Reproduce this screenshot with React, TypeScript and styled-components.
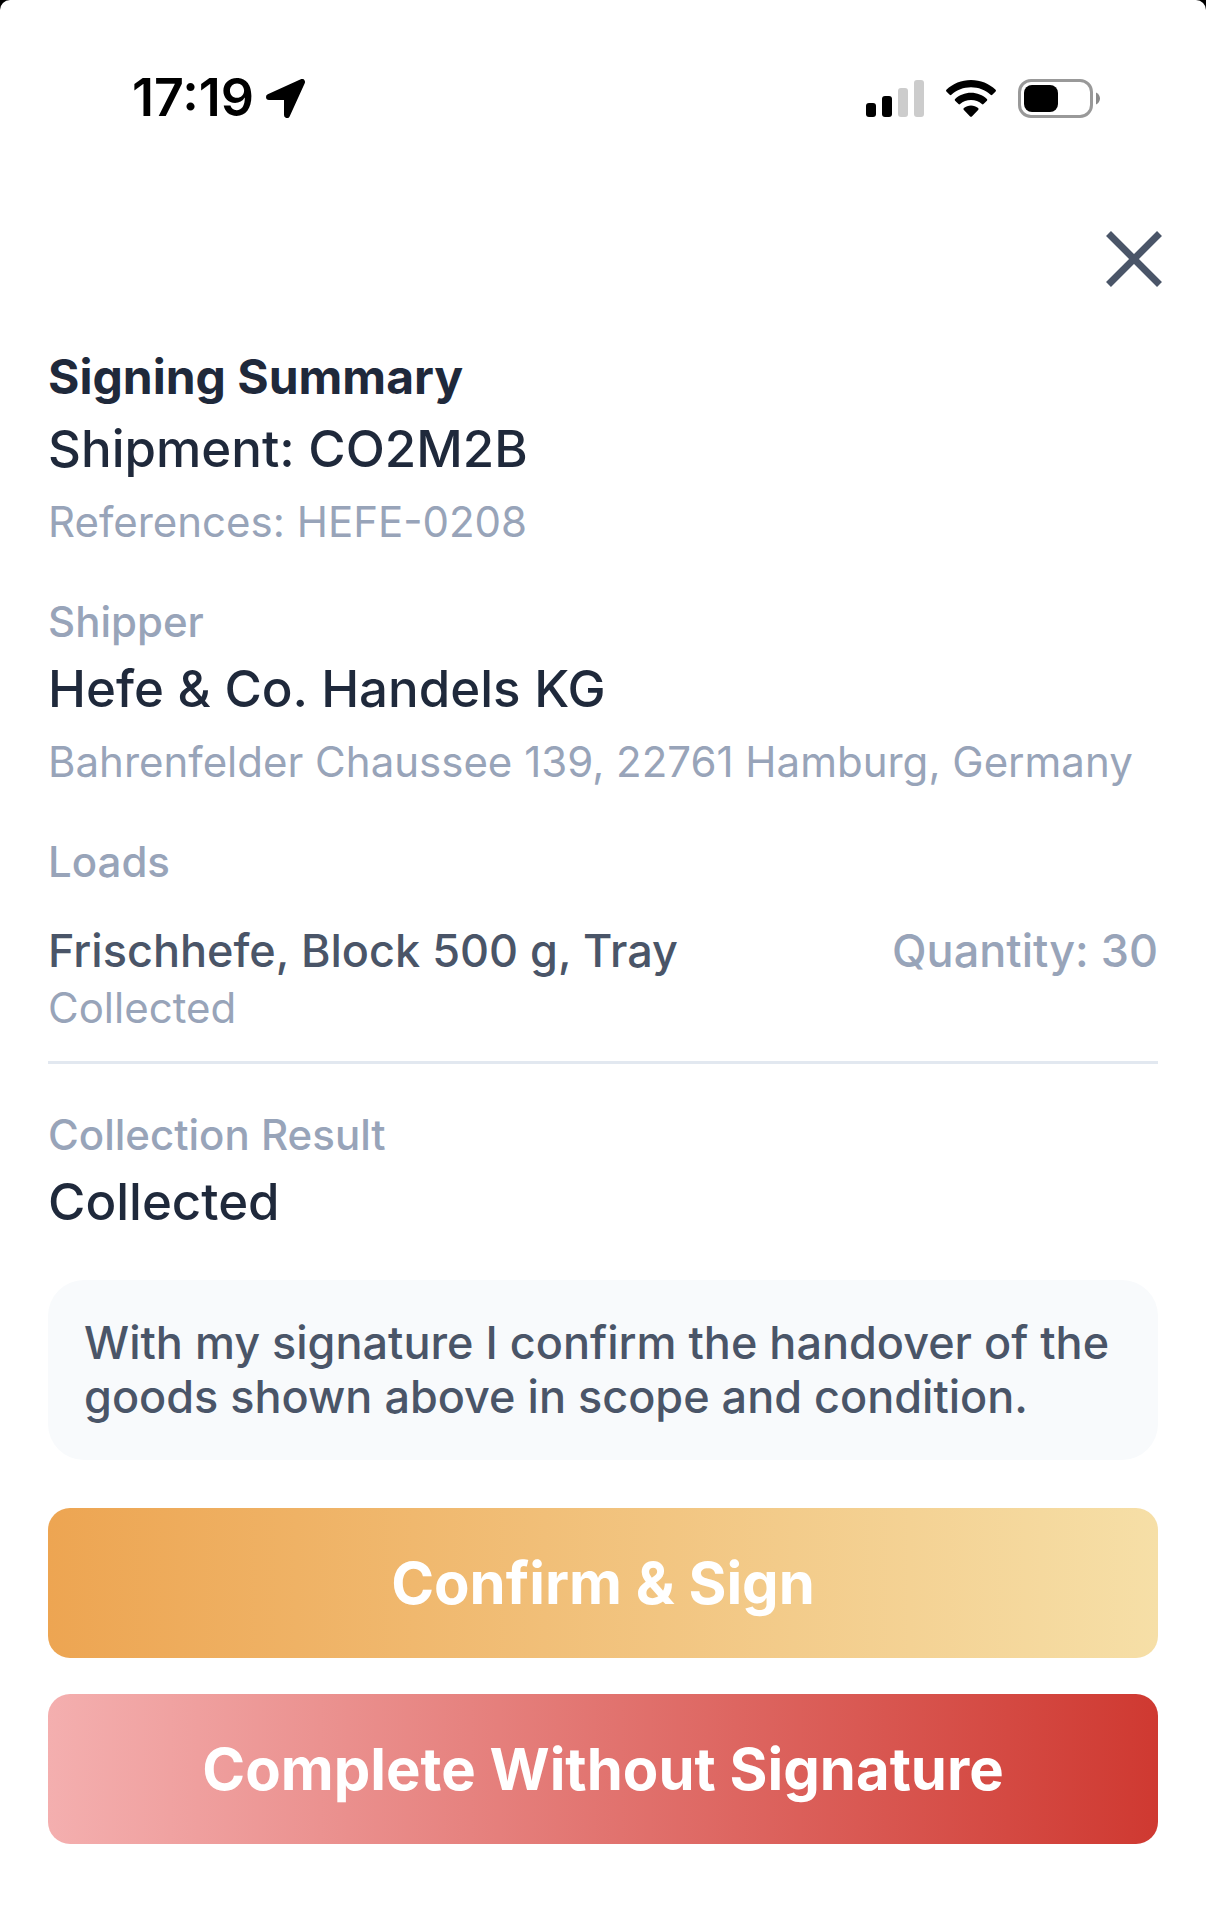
import React from "react";
import styled, { createGlobalStyle } from "styled-components";

const ink = "#1f293b";
const slate = "#4a5568";
const muted = "#98a4b9";

const GlobalStyle = createGlobalStyle`
  * { box-sizing: border-box; }
  body {
    margin: 0;
    background: #000;
    font-family: Inter, "Liberation Sans", sans-serif;
    -webkit-font-smoothing: antialiased;
    font-optical-sizing: none;
    font-variation-settings: "opsz" 14;
  }
`;

const Screen = styled.div`
  min-height: 100vh;
  background: #fff;
  border-radius: 10px 10px 0 0;
`;

const StatusBar = styled.div`
  display: flex;
  align-items: center;
  justify-content: space-between;
  height: 196px;
  padding: 0 106px 0 132px;
`;

const StatusGroup = styled.div<{ $gap: number }>`
  display: flex;
  align-items: center;
  gap: ${(p) => p.$gap}px;
`;

const Time = styled.time`
  font-size: 52px;
  line-height: 60px;
  font-weight: 600;
  color: #000;
`;

const CloseRow = styled.div`
  display: flex;
  justify-content: flex-end;
  padding: 0 36px;
`;

const CloseButton = styled.button`
  display: flex;
  align-items: center;
  justify-content: center;
  width: 72px;
  height: 126px;
  padding: 0;
  border: 0;
  background: none;
  color: ${slate};
  cursor: pointer;
`;

const Content = styled.main`
  padding: 20px 48px 48px;
`;

const Section = styled.section`
  margin-bottom: 34px;
`;

const Title = styled.h1`
  margin: 0;
  font-size: 48px;
  line-height: 70px;
  font-weight: 700;
  color: ${ink};
`;

const Label = styled.h2`
  margin: 0;
  font-size: 42px;
  line-height: 60px;
  font-weight: 500;
  color: ${muted};
`;

const Value = styled.p`
  margin: 0;
  font-size: 51px;
  line-height: 74px;
  font-weight: 500;
  color: ${ink};
`;

const Detail = styled.p`
  margin: 0;
  font-size: 42px;
  line-height: 72px;
  font-weight: 400;
  color: ${muted};
`;

const LoadList = styled.ul`
  list-style: none;
  margin: 32px 0 41px;
  padding: 0;
`;

const LoadItem = styled.li`
  padding-bottom: 23px;
  border-bottom: 3px solid #e2e8f0;
`;

const LoadHeading = styled.div`
  display: flex;
  justify-content: space-between;
  font-size: 45px;
  line-height: 54px;
  font-weight: 500;
`;

const LoadName = styled.span`
  color: ${slate};
`;

const Quantity = styled.span`
  color: ${muted};
`;

const LoadStatus = styled(Detail)`
  line-height: 60px;
`;

const Notice = styled.p`
  margin: 41px 0 48px;
  padding: 36px;
  border-radius: 36px;
  background: #f8fafc;
  font-size: 45px;
  line-height: 54px;
  font-weight: 500;
  color: ${slate};
`;

const Actions = styled.div`
  display: flex;
  flex-direction: column;
  gap: 36px;
`;

const ActionButton = styled.button<{ $from: string; $to: string }>`
  height: 150px;
  border: 0;
  border-radius: 22px;
  background: linear-gradient(to right, ${(p) => p.$from}, ${(p) => p.$to});
  font-family: inherit;
  font-size: 58px;
  font-weight: 700;
  color: #fff;
  cursor: pointer;
`;

const LocationIcon = () => (
  <svg width="39" height="39" viewBox="0 0 39 39" aria-hidden="true">
    <path
      d="M36 3 L21 36 V18 H3 Z"
      fill="#000"
      stroke="#000"
      strokeWidth="6"
      strokeLinejoin="round"
    />
  </svg>
);

const SignalIcon = () => (
  <svg width="58" height="39" viewBox="0 0 58 39" aria-hidden="true">
    <rect x="0" y="24" width="10" height="14" rx="3" fill="#000" />
    <rect x="16" y="17" width="10" height="21" rx="3" fill="#000" />
    <rect x="32" y="9" width="10" height="29" rx="3" fill="#ccc" />
    <rect x="48" y="1" width="10" height="37" rx="3" fill="#ccc" />
  </svg>
);

const WifiIcon = () => (
  <svg width="50" height="39" viewBox="0 -1 50 39" aria-hidden="true">
    <path d="M25 0 C34.500 0 43.200 3.700 49.600 9.700 C50.100 10.200 50.100 10.900 49.600 11.400 L46.300 14.800 C45.800 15.300 45.100 15.300 44.600 14.800 C39.300 10 32.400 7.300 25 7.300 C17.600 7.300 10.700 10 5.400 14.800 C4.900 15.300 4.200 15.300 3.700 14.800 L.4 11.400 C-.1 10.900 -.1 10.200 .4 9.700 C6.800 3.700 15.500 0 25 0 Z" />
    <path d="M25 12.800 C31.100 12.800 36.700 15.100 40.900 19 C41.400 19.500 41.400 20.200 40.900 20.700 L37.500 24 C37 24.500 36.400 24.500 35.900 24 C33 21.500 29.200 20 25 20 C20.800 20 17 21.500 14.100 24 C13.600 24.500 13 24.500 12.500 24 L9.100 20.700 C8.600 20.200 8.600 19.500 9.100 19 C13.300 15.100 18.900 12.800 25 12.800 Z" />
    <path d="M25 25.500 C27.700 25.500 30.100 26.400 32.100 28 C32.700 28.500 32.700 29.300 32.100 29.900 L25.900 36.400 C25.400 36.900 24.600 36.900 24.100 36.400 L17.900 29.900 C17.300 29.300 17.300 28.500 17.900 28 C19.900 26.400 22.300 25.500 25 25.500 Z" />
  </svg>
);

const BatteryIcon = () => (
  <svg width="82" height="39" viewBox="0 0 82 39" aria-hidden="true">
    <rect x="1.500" y="1.500" width="72" height="36" rx="11.500" fill="none" stroke="#999" strokeWidth="3" />
    <rect x="6" y="6" width="34" height="27" rx="8" fill="#000" />
    <path d="M78 13.500 C80.500 14.500 82 17 82 19.500 C82 22 80.500 24.500 78 25.500 Z" fill="#8a8a8a" />
  </svg>
);

const CloseIcon = () => (
  <svg width="56" height="56" viewBox="0 0 56 56" aria-hidden="true">
    <path d="M2.500 2.500 L53.500 53.500 M53.500 2.500 L2.500 53.500" stroke="currentColor" strokeWidth="7" />
  </svg>
);

const loads = [{ name: "Frischhefe, Block 500 g, Tray", quantity: 30, status: "Collected" }];

export default function App() {
  return (
    <>
      <GlobalStyle />
      <Screen>
        <StatusBar>
          <StatusGroup $gap={12}>
            <Time>17:19</Time>
            <LocationIcon />
          </StatusGroup>
          <StatusGroup $gap={22}>
            <SignalIcon />
            <WifiIcon />
            <BatteryIcon />
          </StatusGroup>
        </StatusBar>
        <CloseRow>
          <CloseButton type="button" aria-label="Close">
            <CloseIcon />
          </CloseButton>
        </CloseRow>
        <Content>
          <Section>
            <Title>Signing Summary</Title>
            <Value>Shipment: CO2M2B</Value>
            <Detail>References: HEFE-0208</Detail>
          </Section>
          <Section>
            <Label>Shipper</Label>
            <Value>Hefe &amp; Co. Handels KG</Value>
            <Detail>Bahrenfelder Chaussee 139, 22761 Hamburg, Germany</Detail>
          </Section>
          <Label>Loads</Label>
          <LoadList>
            {loads.map((load) => (
              <LoadItem key={load.name}>
                <LoadHeading>
                  <LoadName>{load.name}</LoadName>
                  <Quantity>Quantity: {load.quantity}</Quantity>
                </LoadHeading>
                <LoadStatus>{load.status}</LoadStatus>
              </LoadItem>
            ))}
          </LoadList>
          <Label>Collection Result</Label>
          <Value>Collected</Value>
          <Notice>
            With my signature I confirm the handover of the goods shown above in scope and condition.
          </Notice>
          <Actions>
            <ActionButton type="button" $from="#eda552" $to="#f6dfa7">
              Confirm &amp; Sign
            </ActionButton>
            <ActionButton type="button" $from="#f4afaf" $to="#cf3931">
              Complete Without Signature
            </ActionButton>
          </Actions>
        </Content>
      </Screen>
    </>
  );
}
